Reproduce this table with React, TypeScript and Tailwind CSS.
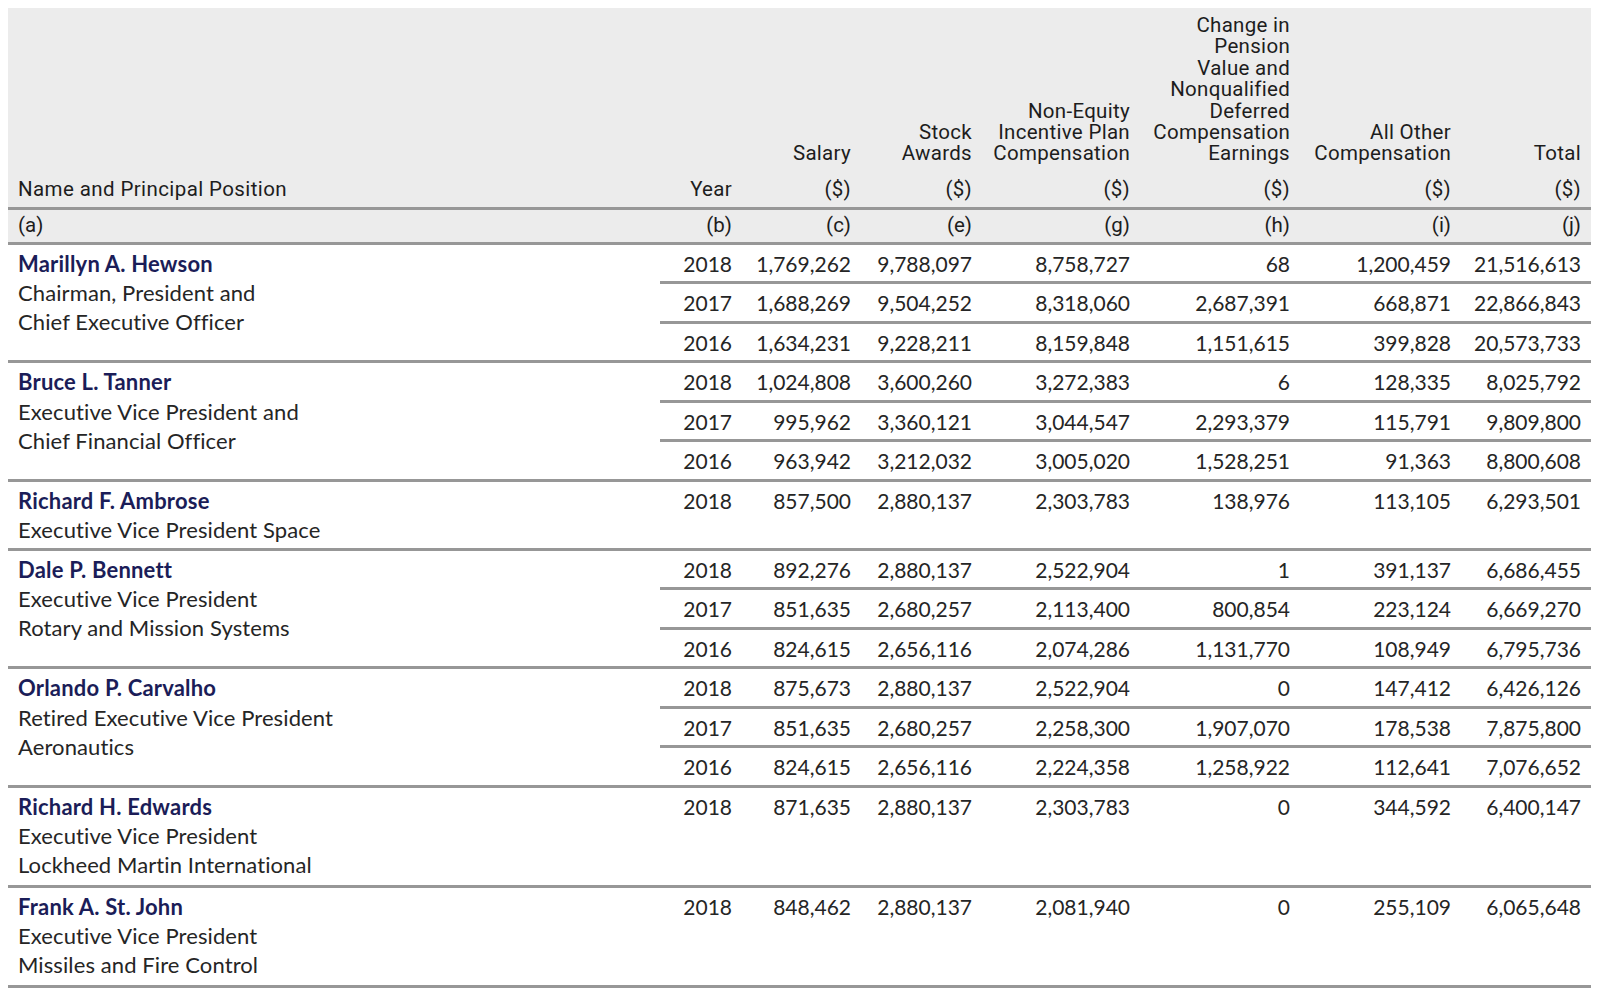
import React from "react";

type Group = { name: string; title: string[]; rows: string[][] };

const groups: Group[] = [
  {
    name: "Marillyn A. Hewson",
    title: ["Chairman, President and", "Chief Executive Officer"],
    rows: [
      ["2018", "1,769,262", "9,788,097", "8,758,727", "68", "1,200,459", "21,516,613"],
      ["2017", "1,688,269", "9,504,252", "8,318,060", "2,687,391", "668,871", "22,866,843"],
      ["2016", "1,634,231", "9,228,211", "8,159,848", "1,151,615", "399,828", "20,573,733"],
    ],
  },
  {
    name: "Bruce L. Tanner",
    title: ["Executive Vice President and", "Chief Financial Officer"],
    rows: [
      ["2018", "1,024,808", "3,600,260", "3,272,383", "6", "128,335", "8,025,792"],
      ["2017", "995,962", "3,360,121", "3,044,547", "2,293,379", "115,791", "9,809,800"],
      ["2016", "963,942", "3,212,032", "3,005,020", "1,528,251", "91,363", "8,800,608"],
    ],
  },
  {
    name: "Richard F. Ambrose",
    title: ["Executive Vice President Space"],
    rows: [["2018", "857,500", "2,880,137", "2,303,783", "138,976", "113,105", "6,293,501"]],
  },
  {
    name: "Dale P. Bennett",
    title: ["Executive Vice President", "Rotary and Mission Systems"],
    rows: [
      ["2018", "892,276", "2,880,137", "2,522,904", "1", "391,137", "6,686,455"],
      ["2017", "851,635", "2,680,257", "2,113,400", "800,854", "223,124", "6,669,270"],
      ["2016", "824,615", "2,656,116", "2,074,286", "1,131,770", "108,949", "6,795,736"],
    ],
  },
  {
    name: "Orlando P. Carvalho",
    title: ["Retired Executive Vice President", "Aeronautics"],
    rows: [
      ["2018", "875,673", "2,880,137", "2,522,904", "0", "147,412", "6,426,126"],
      ["2017", "851,635", "2,680,257", "2,258,300", "1,907,070", "178,538", "7,875,800"],
      ["2016", "824,615", "2,656,116", "2,224,358", "1,258,922", "112,641", "7,076,652"],
    ],
  },
  {
    name: "Richard H. Edwards",
    title: ["Executive Vice President", "Lockheed Martin International"],
    rows: [["2018", "871,635", "2,880,137", "2,303,783", "0", "344,592", "6,400,147"]],
  },
  {
    name: "Frank A. St. John",
    title: ["Executive Vice President", "Missiles and Fire Control"],
    rows: [["2018", "848,462", "2,880,137", "2,081,940", "0", "255,109", "6,065,648"]],
  },
];

const colW = [
  "w-[80px] pr-2",
  "w-[119px] pr-2",
  "w-[121px] pr-2",
  "w-[158px] pr-2",
  "w-[160px] pr-2",
  "w-[161px] pr-2",
  "w-[132px] pr-[10px]",
];

const headLabels: string[][] = [
  [],
  ["Salary"],
  ["Stock", "Awards"],
  ["Non-Equity", "Incentive Plan", "Compensation"],
  ["Change in", "Pension", "Value and", "Nonqualified", "Deferred", "Compensation", "Earnings"],
  ["All Other", "Compensation"],
  ["Total"],
];

const letters = ["(b)", "(c)", "(e)", "(g)", "(h)", "(i)", "(j)"];

const headFont = { fontFamily: "Roboto, 'Liberation Sans', sans-serif" };
const bodyFont = { fontFamily: "Lato, 'Open Sans', sans-serif" };

export default function App() {
  return (
    <div className="bg-white w-[1600px] h-[1005px] p-2">
      <div className="w-[1583px]">
        {/* Header labels */}
        <div
          className="flex bg-[#ececec] border-b-[3px] border-[#979797] pt-[7px] pb-[6px] text-[20.5px] leading-[21.4px] tracking-[0.3px] text-[#1d1d1d]"
          style={headFont}
        >
          <div className="w-[652px] pl-[10px] flex flex-col justify-end">
            <div className="tracking-[0.4px]">Name and Principal Position</div>
          </div>
          {colW.map((w, i) => (
            <div key={i} className={`${w} flex flex-col justify-end text-right whitespace-nowrap`}>
              {headLabels[i].map((l) => (
                <div key={l}>{l}</div>
              ))}
              <div className={headLabels[i].length ? "mt-[14.6px]" : ""}>{i === 0 ? "Year" : "($)"}</div>
            </div>
          ))}
        </div>
        {/* Letters row */}
        <div
          className="flex items-center h-[35px] bg-[#ececec] border-b-[3px] border-[#979797] text-[20.5px] leading-[21.4px] text-[#1d1d1d]"
          style={headFont}
        >
          <div className="w-[652px] pl-[10px]">(a)</div>
          {colW.map((w, i) => (
            <div key={i} className={`${w} text-right`}>
              {letters[i]}
            </div>
          ))}
        </div>
        {/* Body */}
        <div className="text-[21px] leading-[29.2px] text-[#252525]" style={bodyFont}>
          {groups.map((g) => {
            const single = g.rows.length === 1;
            const minH = single ? (g.title.length === 1 ? "min-h-[69px]" : "min-h-[100px]") : "";
            return (
              <div key={g.name} className={`flex border-b-[3px] border-[#979797] ${minH}`}>
                <div className="w-[652px] pl-[10px] pt-[4px] text-[22px] tracking-[0.1px]">
                  <div className="font-bold text-[#1b1d58] tracking-[0.2px]">{g.name}</div>
                  {g.title.map((t) => (
                    <div key={t}>{t}</div>
                  ))}
                </div>
                <div className="flex-1 flex flex-col">
                  {g.rows.map((r, ri) => (
                    <div
                      key={ri}
                      className={`flex pt-[4px] ${single ? "flex-1" : "h-[36.5px]"} ${
                        ri < g.rows.length - 1 ? "border-b-[3px] border-[#979797] h-[39.5px]" : ""
                      }`}
                    >
                      {r.map((v, ci) => (
                        <div key={ci} className={`${colW[ci]} text-right whitespace-nowrap`}>
                          {v}
                        </div>
                      ))}
                    </div>
                  ))}
                </div>
              </div>
            );
          })}
        </div>
      </div>
    </div>
  );
}
